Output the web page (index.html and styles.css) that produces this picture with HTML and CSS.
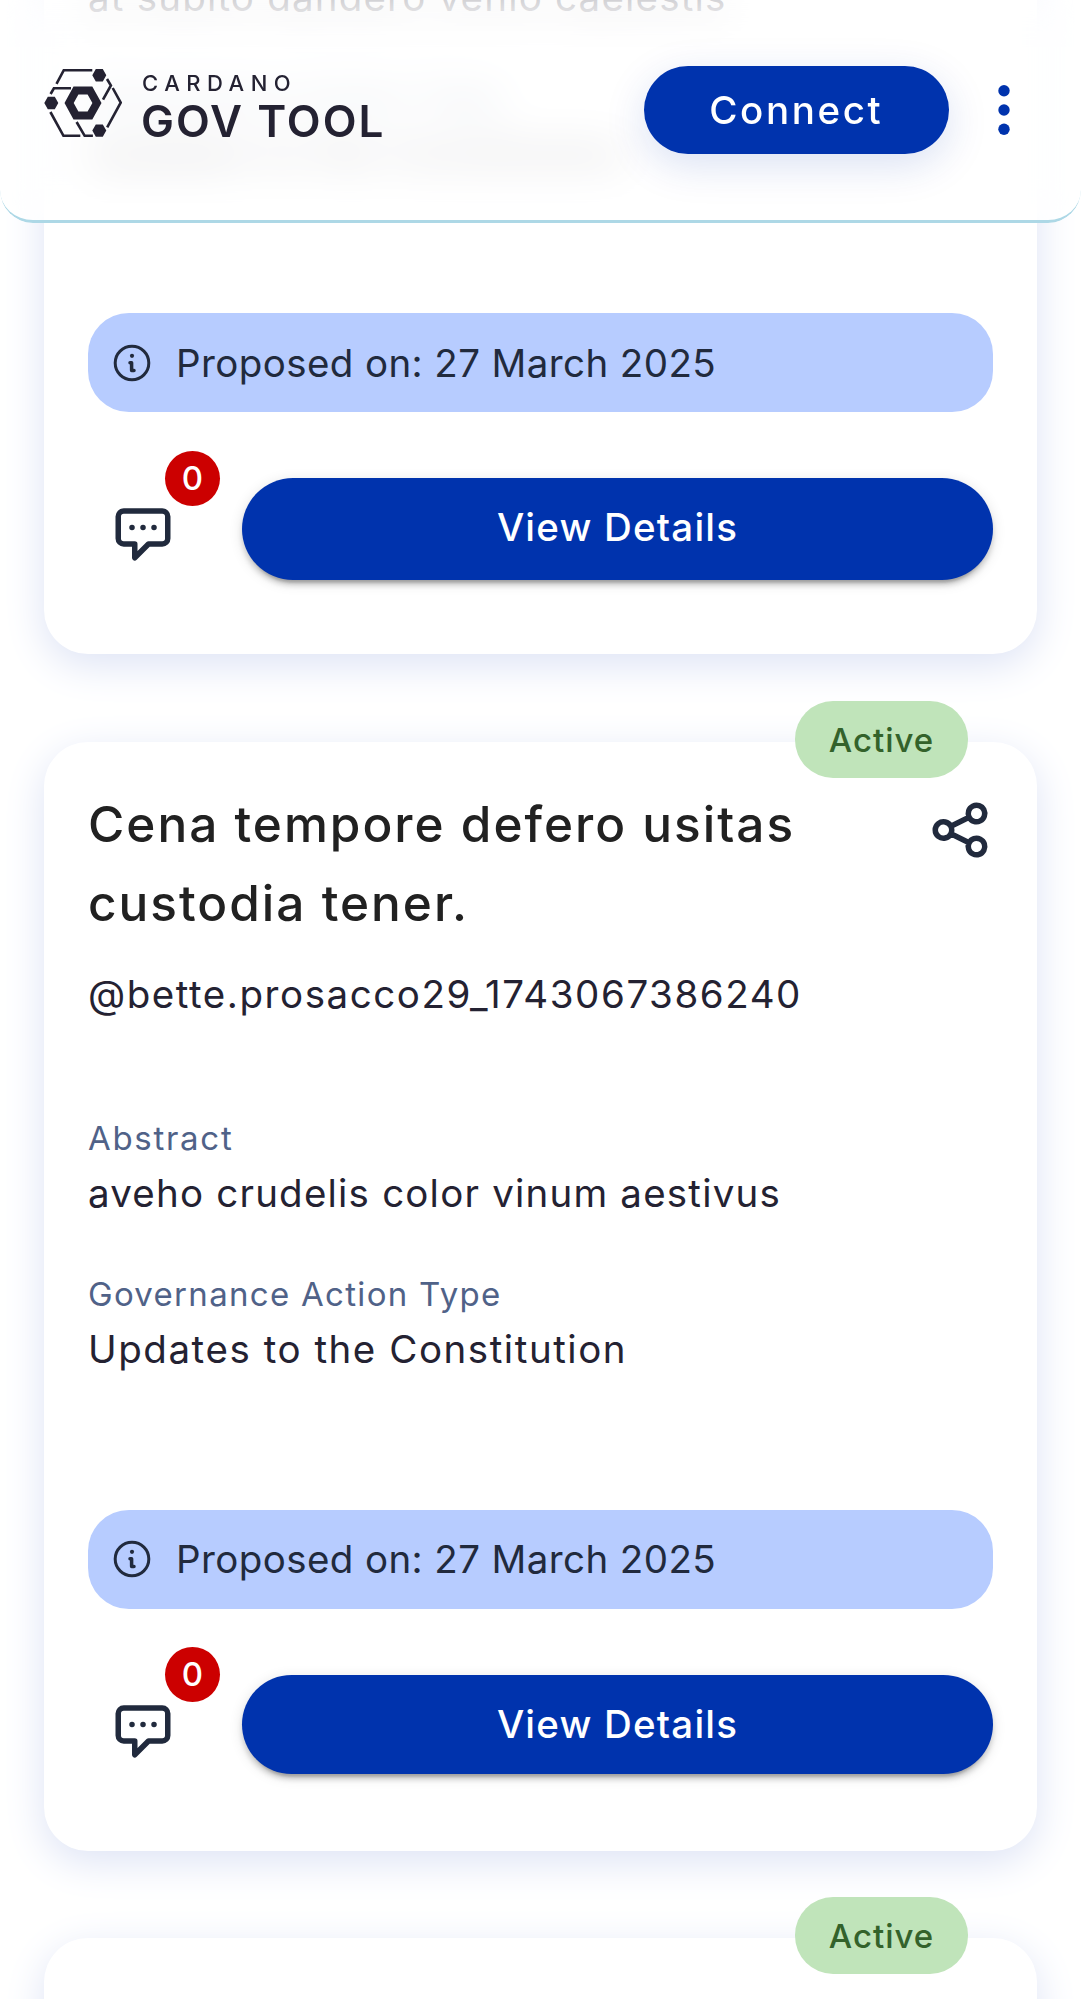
FILE: index.html
```html
<!DOCTYPE html>
<html lang="en">
<head>
<meta charset="utf-8">
<title>Cardano Gov Tool</title>
<link rel="stylesheet" href="styles.css">
</head>
<body>
<svg class="sprite" aria-hidden="true">
  <symbol id="info" viewBox="0 0 44 44">
    <circle cx="22" cy="22" r="16.8" fill="none" stroke="currentColor" stroke-width="3"/>
    <circle cx="22" cy="14.8" r="2.1" fill="currentColor"/>
    <path d="M20 21.8h1.6v7.6h2.4" fill="none" stroke="currentColor" stroke-width="3.5" stroke-linecap="round" stroke-linejoin="round"/>
  </symbol>
  <symbol id="chat" viewBox="0 0 24 24">
    <path d="M8 10h.01M12 10h.01M16 10h.01M9 16H5a2 2 0 01-2-2V6a2 2 0 012-2h14a2 2 0 012 2v8a2 2 0 01-2 2h-5l-5 5v-5z" fill="none" stroke="currentColor" stroke-width="2" stroke-linecap="round" stroke-linejoin="round"/>
  </symbol>
  <symbol id="share" viewBox="0 0 24 24">
    <path d="M8.684 13.342C8.886 12.938 9 12.482 9 12c0-.482-.114-.938-.316-1.342m0 2.684a3 3 0 110-2.684m0 2.684l6.632 3.316m-6.632-6l6.632-3.316m0 0a3 3 0 105.367-2.684 3 3 0 00-5.367 2.684zm0 9.316a3 3 0 105.368 2.684 3 3 0 00-5.368-2.684z" fill="none" stroke="currentColor" stroke-width="2" stroke-linecap="round" stroke-linejoin="round"/>
  </symbol>
</svg>

<header class="header">
  <a class="logo">
    <svg class="logo-mark" viewBox="0 0 78 68">
      <g fill="none" stroke="currentColor" stroke-width="2.6">
        <path d="M12.5 14.8L19.8 1.2H48.3M6.6 25L9.9 19.3H27M63 10l3.9 6.5L59 30.6M68.7 19l8 14.6L63.2 58.4M6.4 43L19.5 66.8H36.3M32.6 53l8.1 13.8h8.2"/>
      </g>
      <path d="M48.3 6.3l3.5-6.2h7l3.5 6.2-3.5 6.2h-7zM.3 34l3.5-6.2h7l3.5 6.2-3.5 6.2h-7zM48.3 61.6l3.5-6.2h7l3.5 6.2-3.5 6.2h-7z" fill="currentColor"/>
      <path fill-rule="evenodd" d="M20.5 34l9-16.4h18.8L57.5 34l-9.2 16.4H29.5zM29.7 34l4.7 8.5h9.2l4.8-8.5-4.8-8.5h-9.2z" fill="currentColor"/>
    </svg>
    <span class="logo-text">
      <span class="logo-top">CARDANO</span>
      <span class="logo-bottom">GOV TOOL</span>
    </span>
  </a>
  <div class="header-actions">
    <button class="connect"><span class="t-connect">Connect</span></button>
    <svg class="menu-dots" viewBox="0 0 12 52"><circle cx="6" cy="6.7" r="5.7"/><circle cx="6" cy="26" r="5.7"/><circle cx="6" cy="45.3" r="5.7"/></svg>
  </div>
</header>

<main class="list">
  <article class="card card-first">
    <p class="value v-abs">at subito dandero venio caelestis</p>
    <p class="label l-type">Governance Action Type</p>
    <p class="value v-type">Updates to the Constitution</p>
    <div class="date"><svg class="date-icon"><use href="#info"/></svg><span>Proposed on: 27 March 2025</span></div>
    <div class="actions">
      <div class="comments"><svg class="icon"><use href="#chat"/></svg><span class="count">0</span></div>
      <button class="view view-tall"><span class="t-view">View Details</span></button>
    </div>
  </article>

  <article class="card card-full">
    <span class="chip"><span class="t-chip">Active</span></span>
    <div class="head">
      <h2 class="title">Cena tempore defero usitas<br>custodia tener.</h2>
      <svg class="icon share"><use href="#share"/></svg>
    </div>
    <p class="user">@bette.prosacco29_1743067386240</p>
    <p class="label l-abs">Abstract</p>
    <p class="value v-abs">aveho crudelis color vinum aestivus</p>
    <p class="label l-type">Governance Action Type</p>
    <p class="value v-type">Updates to the Constitution</p>
    <div class="date"><svg class="date-icon"><use href="#info"/></svg><span>Proposed on: 27 March 2025</span></div>
    <div class="actions">
      <div class="comments"><svg class="icon"><use href="#chat"/></svg><span class="count">0</span></div>
      <button class="view"><span class="t-view">View Details</span></button>
    </div>
  </article>

  <article class="card card-last"><span class="chip"><span class="t-chip">Active</span></span></article>
</main>
</body>
</html>
```
FILE: styles.css
```css
* { box-sizing: border-box; }
body {
  margin: 0;
  height: 1999px;
  overflow: hidden;
  background: #fff;
  font-family: Inter, "Open Sans", sans-serif;
  color: #242232;
}
p, h2 { margin: 0; white-space: nowrap; }
button { border: 0; padding: 0; font: inherit; color: #fff; background: #0033ad; white-space: nowrap; }
.sprite { display: none; }

/* Header */
.header {
  position: fixed;
  inset: 0 0 auto;
  z-index: 2;
  height: 222.5px;
  padding: 66px 71px 0 44px;
  display: flex;
  justify-content: space-between;
  align-items: flex-start;
}
.header::before {
  content: "";
  position: absolute;
  inset: 0;
  z-index: -1;
  border-bottom: 3px solid #add8e6;
  border-radius: 0 0 33px 33px;
  background: rgba(255, 255, 255, .76);
  backdrop-filter: blur(22px);
  -webkit-mask: linear-gradient(rgba(0, 0, 0, .89) 14px, #000 50px);
  mask: linear-gradient(rgba(0, 0, 0, .89) 14px, #000 50px);
}
.logo { display: flex; gap: 20px; padding-top: 3px; }
.logo-mark { width: 78px; height: 68px; }
.logo-text { display: flex; flex-direction: column; white-space: nowrap; }
.logo-top { font-size: 22px; line-height: 28px; font-weight: 500; letter-spacing: 6.5px; }
.logo-bottom { margin-left: -1px; font-size: 44px; line-height: 48px; font-weight: 600; letter-spacing: 2px; }
.header-actions { display: flex; align-items: center; gap: 49px; }
.connect {
  width: 305.5px;
  height: 88px;
  border-radius: 44px;
  font-size: 38.5px;
  font-weight: 500;
  box-shadow: 0 11px 41px rgba(0, 51, 173, .15);
}
.t-connect { letter-spacing: 2.6px; }
.menu-dots { width: 12px; height: 52px; fill: #0033ad; }

/* Cards */
.list { height: 1999px; padding: 0 44px; overflow: hidden; }
.card {
  position: relative;
  display: flex;
  flex-direction: column;
  padding: 43px 44px 44px;
  border-radius: 44px;
  background: #fff;
  box-shadow: 0 11px 41px #dde3f5;
}
.card-first { height: 774px; margin: -119.6px 0 88px; justify-content: flex-end; }
.card-full { margin-bottom: 87.8px; }
.card-last { height: 200px; }
.chip {
  position: absolute;
  top: -41.3px;
  right: 69px;
  width: 173px;
  height: 77px;
  border-radius: 38px;
  display: flex;
  align-items: center;
  justify-content: center;
  background: #c0e4ba;
  color: #33622b;
  font-size: 33px;
  font-weight: 500;
}
.t-chip { letter-spacing: 1px; }
.head { display: flex; justify-content: space-between; }
.title { color: #212121; font-size: 49.5px; line-height: 79px; font-weight: 500; letter-spacing: 2px; }
.icon { width: 66px; height: 66px; color: #212a3d; }
.share { margin-top: 12px; }
.user { margin: 23px 0 89.6px; font-size: 38.5px; line-height: 57.75px; letter-spacing: 1.55px; }
.label { color: #506288; font-size: 33px; line-height: 49.5px; }
.value { margin-top: 1.5px; font-size: 38.5px; line-height: 57.75px; }
.l-abs { letter-spacing: 1.7px; }
.l-type { letter-spacing: 1.3px; }
.v-abs { margin-bottom: 47.5px; letter-spacing: 1.2px; }
.v-type { letter-spacing: 1.55px; }
.date {
  margin: 130.8px 0 66px;
  height: 99px;
  padding-left: 22px;
  display: flex;
  align-items: center;
  gap: 22px;
  border-radius: 41px;
  background: #b7ccff;
  color: #212a3d;
  font-size: 38.5px;
  letter-spacing: .4px;
  white-space: nowrap;
}
.date-icon { width: 44px; height: 44px; }
.actions { display: flex; align-items: flex-start; gap: 44px; height: 132px; }
.comments { position: relative; width: 110px; height: 110px; padding: 22px; }
.count {
  position: absolute;
  top: -27.5px;
  right: -22px;
  width: 55px;
  height: 55px;
  border-radius: 50%;
  background: #c00;
  color: #fff;
  font-size: 33px;
  line-height: 55px;
  font-weight: 500;
  text-align: center;
}
.view {
  flex: 1;
  height: 99px;
  padding-bottom: 1px;
  border-radius: 51px;
  font-size: 38.5px;
  font-weight: 500;
  box-shadow: 0 8.25px 2.75px -5.5px rgba(0, 0, 0, .2), 0 5.5px 5.5px rgba(0, 0, 0, .14), 0 2.75px 13.75px rgba(0, 0, 0, .12);
}
.view-tall { height: 102px; padding-bottom: 4px; }
.t-view { letter-spacing: 1.2px; }
```
